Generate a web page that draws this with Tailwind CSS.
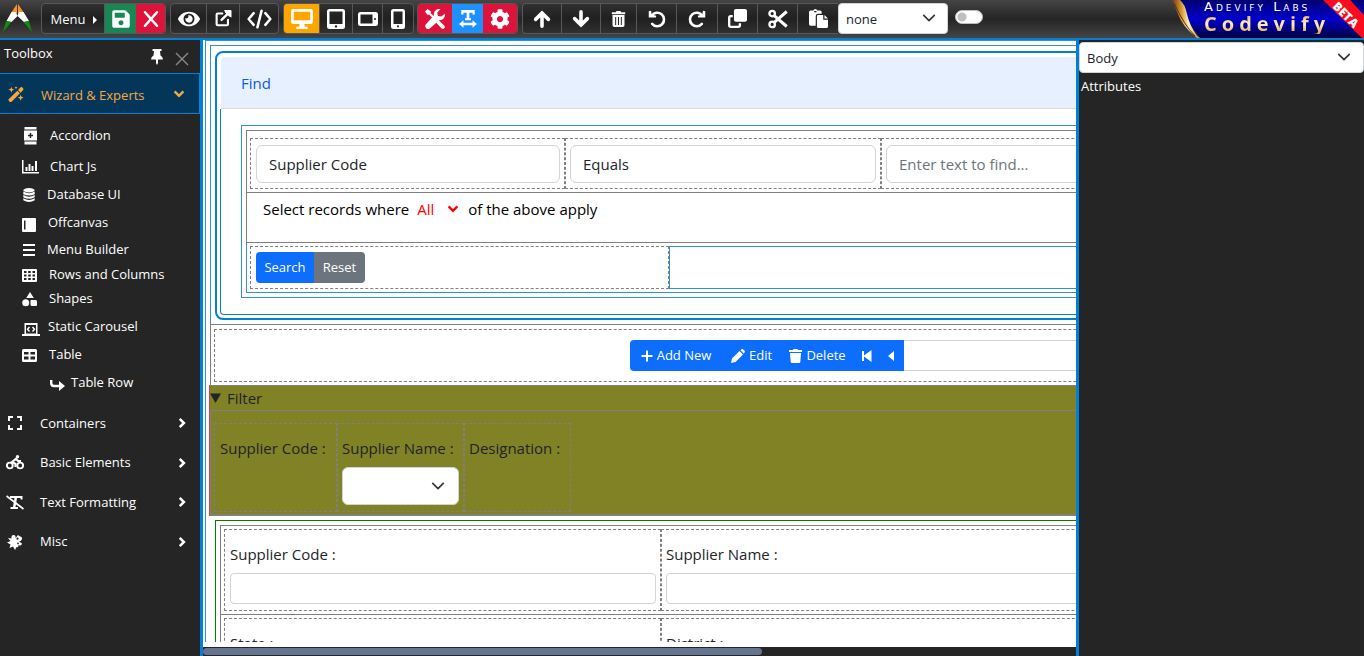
<!DOCTYPE html>
<html lang="en">
<head>
<meta charset="utf-8">
<title>Codevify</title>
<script src="https://cdn.jsdelivr.net/npm/@tailwindcss/browser@4"></script>
</head>
<body class="flex h-screen flex-col overflow-hidden bg-[#252525] font-['Open_Sans',sans-serif] text-[13px] text-white">

<svg class="hidden" aria-hidden="true">
  <symbol id="save" viewBox="0 0 448 512"><path d="M433.941 129.941l-83.882-83.882A48 48 0 0 0 316.118 32H48C21.49 32 0 53.49 0 80v352c0 26.51 21.49 48 48 48h352c26.51 0 48-21.49 48-48V163.882a48 48 0 0 0-14.059-33.941zM224 416c-35.346 0-64-28.654-64-64 0-35.346 28.654-64 64-64s64 28.654 64 64c0 35.346-28.654 64-64 64zm96-304.52V212c0 6.627-5.373 12-12 12H76c-6.627 0-12-5.373-12-12V108c0-6.627 5.373-12 12-12h228.52c3.183 0 6.235 1.264 8.485 3.515l3.48 3.48A11.996 11.996 0 0 1 320 111.48z"/></symbol>
  <symbol id="close" viewBox="0 0 24 24"><path d="M4 3L20 21M20 3L4 21" fill="none" stroke="currentColor" stroke-width="3.4" stroke-linecap="round"/></symbol>
  <symbol id="thin-close" viewBox="0 0 24 24"><path d="M3 3L21 21M21 3L3 21" fill="none" stroke="currentColor" stroke-width="2"/></symbol>
  <symbol id="eye" viewBox="0 0 576 512"><path d="M572.52 241.4C518.29 135.59 410.93 64 288 64S57.68 135.64 3.48 241.41a32.35 32.35 0 0 0 0 29.19C57.71 376.41 165.07 448 288 448s230.32-71.64 284.52-177.41a32.35 32.35 0 0 0 0-29.19zM288 400a144 144 0 1 1 144-144 143.93 143.93 0 0 1-144 144zm0-240a95.31 95.31 0 0 0-25.31 3.79 47.85 47.85 0 0 1-66.9 66.9A95.78 95.78 0 1 0 288 160z"/></symbol>
  <symbol id="external" viewBox="0 0 24 24"><path d="M11 5H4.500Q3 5 3 6.500V20Q3 21.500 4.500 21.500H17.500Q19 21.500 19 20V14" fill="none" stroke="currentColor" stroke-width="3" stroke-linecap="round"/><path d="M10 14L20 4" stroke="currentColor" stroke-width="3.400" stroke-linecap="round"/><path d="M13.500 0H22.500Q24 0 24 1.500V10.500L20.500 9L15 3.500Z"/></symbol>
  <symbol id="code" viewBox="0 0 30 24"><path d="M8 5L2 12L8 19M22 5L28 12L22 19M17.500 2L12.500 22" fill="none" stroke="currentColor" stroke-width="3" stroke-linecap="round" stroke-linejoin="round"/></symbol>
  <symbol id="desktop" viewBox="0 0 24 22"><path fill-rule="evenodd" d="M2.500 0H21.500Q24 0 24 2.500V14Q24 16.500 21.500 16.500H14.500L15.200 19.500H17.500Q18.500 19.500 18.500 20.700T17.500 22H6.500Q5.500 22 5.500 20.700T6.500 19.500H8.800L9.500 16.500H2.500Q0 16.500 0 14V2.500Q0 0 2.500 0ZM3 3V12.500H21V3Z"/></symbol>
  <symbol id="tablet" viewBox="0 0 18 20"><path fill-rule="evenodd" d="M2.500 0H15.500Q18 0 18 2.500V17.500Q18 20 15.500 20H2.500Q0 20 0 17.500V2.500Q0 0 2.500 0ZM2.500 2.500V15H15.500V2.500ZM9 16.200A1.200 1.200 0 1 0 9 18.600A1.200 1.200 0 1 0 9 16.200Z"/></symbol>
  <symbol id="tablet-wide" viewBox="0 0 20 14"><path fill-rule="evenodd" d="M2.500 0H17.500Q20 0 20 2.500V11.500Q20 14 17.500 14H2.500Q0 14 0 11.500V2.500Q0 0 2.500 0ZM2.500 2.500V11.500H14.500V2.500ZM17 6A1 1 0 1 0 17 8A1 1 0 1 0 17 6Z"/></symbol>
  <symbol id="phone" viewBox="0 0 14 20"><path fill-rule="evenodd" d="M2.500 0H11.500Q14 0 14 2.500V17.500Q14 20 11.500 20H2.500Q0 20 0 17.500V2.500Q0 0 2.500 0ZM2.500 2.500V15H11.500V2.500ZM7 16.200A1.100 1.100 0 1 0 7 18.400A1.100 1.100 0 1 0 7 16.200Z"/></symbol>
  <symbol id="tools" viewBox="0 0 512 512"><path d="M0 65L65 0L150 62V112L235 197L198 235L112 150H62ZM285 290C325 265 350 285 365 300L490 420C520 450 515 480 490 495C470 515 440 515 420 490L305 370C280 345 280 315 285 290Z"/><path d="M505 120C525 190 475 290 365 285L130 490C100 520 60 520 30 490C-5 460 0 415 25 390L225 165C220 60 300-20 395 7L315 90L330 180L420 195Z"/></symbol>
  <symbol id="textwidth" viewBox="0 0 24 24"><path d="M3 0H21V6H18V3.500H13.800V11H16V13.500H8V11H10.200V3.500H6V6H3ZM0 18.500L6 13.800V17H18V13.800L24 18.500L18 23.500V20.200H6V23.500Z"/></symbol>
  <symbol id="cog" viewBox="0 0 512 512"><path d="M487.4 315.7l-42.6-24.6c4.3-23.2 4.3-47 0-70.2l42.6-24.6c4.9-2.8 7.1-8.6 5.5-14-11.1-35.6-30-67.8-54.7-94.6-3.8-4.1-10-5.1-14.8-2.3L380.800 110c-17.9-15.4-38.5-27.3-60.8-35.1V25.800c0-5.6-3.9-10.5-9.4-11.7-36.7-8.2-74.3-7.8-109.2 0-5.5 1.2-9.4 6.1-9.4 11.7V75c-22.2 7.9-42.8 19.8-60.8 35.1L88.700 85.500c-4.9-2.8-11-1.9-14.8 2.3-24.7 26.7-43.6 58.9-54.7 94.6-1.7 5.400.6 11.2 5.5 14L67.300 221c-4.3 23.2-4.3 47 0 70.2l-42.6 24.6c-4.9 2.8-7.1 8.6-5.5 14 11.1 35.6 30 67.8 54.7 94.6 3.8 4.1 10 5.1 14.8 2.3l42.6-24.6c17.9 15.4 38.5 27.3 60.8 35.1v49.2c0 5.600 3.9 10.5 9.4 11.7 36.7 8.2 74.3 7.800 109.2 0 5.5-1.2 9.4-6.1 9.4-11.7v-49.2c22.2-7.9 42.800-19.8 60.800-35.100l42.6 24.6c4.9 2.8 11 1.9 14.8-2.3 24.7-26.7 43.6-58.9 54.7-94.6 1.5-5.5-.7-11.3-5.6-14.1zM256 336c-44.1 0-80-35.9-80-80s35.9-80 80-80 80 35.9 80 80-35.9 80-80 80z"/></symbol>
  <symbol id="arrow-up" viewBox="0 0 24 24"><path d="M12 21.500V5M3.500 12.500L12 4L20.500 12.500" fill="none" stroke="currentColor" stroke-width="4.800" stroke-linecap="round" stroke-linejoin="miter"/></symbol>
  <symbol id="trash-lines" viewBox="0 0 22 24"><path fill-rule="evenodd" d="M1 2H7L8 0H14L15 2H21V5H1ZM2 6H20V21.500Q20 24 17.500 24H4.500Q2 24 2 21.500ZM6 9V21H7.500V9ZM10.200 9V21H11.800V9ZM14.500 9V21H16V9Z"/></symbol>
  <symbol id="undo" viewBox="0 0 24 24"><path d="M5 7.500A9 9 0 1 1 5.500 18.500" fill="none" stroke="currentColor" stroke-width="3.400" stroke-linecap="round"/><path d="M1 1.500L4 1L5 6L11 7.500L10.500 10H1Z"/></symbol>
  <symbol id="copy" viewBox="0 0 24 24"><path d="M10 0H21.500Q24 0 24 2.500V13.500Q24 16 21.500 16H10Q7.500 16 7.500 13.500V2.500Q7.500 0 10 0Z"/><path d="M6 9H3.500Q1.500 9 1.500 11V20.500Q1.500 22.500 3.500 22.500H13Q15 22.500 15 20.500V18" fill="none" stroke="currentColor" stroke-width="3"/></symbol>
  <symbol id="scissors" viewBox="0 0 24 24"><g fill="none" stroke="currentColor"><circle cx="5" cy="5.500" r="3.300" stroke-width="2.800"/><circle cx="5" cy="18.500" r="3.300" stroke-width="2.800"/><path d="M7.500 8L22.500 21M7.500 16L22.500 3" stroke-width="3.600"/></g></symbol>
  <symbol id="paste" viewBox="0 0 24 24"><path fill-rule="evenodd" d="M2 2H5.500Q6 0 8 0T10.500 2H14Q16 2 16 4V6H11.500Q8.500 6 8.500 9V21H2Q0 21 0 19V4Q0 2 2 2ZM6.500 2.500V4H9.500V2.500Z"/><path d="M11.500 7.500H18V13.500H24V22Q24 24 22 24H12Q10 24 10 22V9Q10 7.500 11.500 7.500ZM19.500 7.500L24 12H19.500Z"/></symbol>
  <symbol id="chevron" viewBox="0 0 16 16"><path d="M2 5L8 11L14 5" fill="none" stroke="currentColor" stroke-width="2" stroke-linecap="round" stroke-linejoin="round"/></symbol>
  <symbol id="chevron-bold" viewBox="0 0 16 16"><path d="M3 5L8 10L13 5" fill="none" stroke="currentColor" stroke-width="2.800"/></symbol>
  <symbol id="chevron-next" viewBox="0 0 16 16"><path d="M5 2.500L10.500 8L5 13.500" fill="none" stroke="currentColor" stroke-width="3.400"/></symbol>
  <symbol id="pin" viewBox="0 0 12 16"><path d="M1.500 0H10.500V2H9L9.500 6.500Q12 8 12 10.500H7V14L6 16L5 14V10.500H0Q0 8 2.500 6.500L3 2H1.500Z"/></symbol>
  <symbol id="wand" viewBox="0 0 24 24"><path d="M1 20L14 7L18 11L5 24Q3 24.500 1.500 22.500T1 20ZM15 6L19 2Q20.500 1 22 2.500T23 5.500L19 10ZM5 1L6.200 4.300L9.500 5.500L6.200 6.700L5 10L3.800 6.700L.5 5.500L3.800 4.300ZM12 0L12.700 1.800L14.500 2.500L12.700 3.200L12 5L11.300 3.200L9.500 2.500L11.300 1.800ZM19 13L20.200 16.300L23.500 17.500L20.200 18.700L19 22L17.800 18.700L14.500 17.500L17.800 16.300Z"/></symbol>
  <symbol id="accordion" viewBox="0 0 14 18"><path fill-rule="evenodd" d="M1 0H13V2.500H1ZM.5 3.500H13.500V13.500H.5ZM6.300 6V7.800H4.500V9.200H6.300V11H7.700V9.200H9.500V7.800H7.700V6ZM1 14.500H13V17.500H1Z"/></symbol>
  <symbol id="chart" viewBox="0 0 17 14"><path d="M0 0H1.500V12H17V13.500H0ZM3.500 7H5.500V11H3.500ZM6.500 4H8.500V11H6.500ZM9.500 6H11.500V11H9.500ZM13 1H15V11H13Z"/></symbol>
  <symbol id="database" viewBox="0 0 14 16"><ellipse cx="7" cy="2.500" rx="6.500" ry="2.500"/><path d="M.5 4Q7 8 13.500 4V7Q7 10 .5 7ZM.5 8Q7 12 13.500 8V10.500Q7 14 .5 10.500ZM.5 11.800Q7 15.500 13.500 11.800V14Q7 18 .5 14Z"/></symbol>
  <symbol id="offcanvas" viewBox="0 0 14 14"><path fill-rule="evenodd" d="M1 0H13Q14 0 14 1V13Q14 14 13 14H1Q0 14 0 13V1Q0 0 1 0ZM2 2.500V11.500H3.500V2.500Z"/></symbol>
  <symbol id="menu" viewBox="0 0 14 12"><path d="M1 0H13V2H1ZM1 5H13V7H1ZM1 10H13V12H1Z"/></symbol>
  <symbol id="grid3" viewBox="0 0 15 13"><path fill-rule="evenodd" d="M1 0H14Q15 0 15 1V12Q15 13 14 13H1Q0 13 0 12V1Q0 0 1 0ZM2 2V4H4.500V2ZM6.200 2V4H8.800V2ZM10.500 2V4H13V2ZM2 5.500V7.500H4.500V5.500ZM6.200 5.500V7.500H8.800V5.500ZM10.500 5.500V7.500H13V5.500ZM2 9V11H4.500V9ZM6.200 9V11H8.800V9ZM10.500 9V11H13V9Z"/></symbol>
  <symbol id="shapes" viewBox="0 0 15 15"><path d="M8 0L11.800 6H4.200ZM9 8H13.500Q15 8 15 9.500V13Q15 14 14 14H10Q8.500 14 8.500 12.500V8.500Z"/><circle cx="3.700" cy="10.800" r="3.500"/></symbol>
  <symbol id="carousel" viewBox="0 0 18 15"><path fill-rule="evenodd" d="M2.500 1H15.500V12H18V14H0V12H2.500ZM4 3V11.500H14V3Z"/><path d="M7.500 5L5.500 7.300L7.500 9.500M10.500 5L12.500 7.300L10.500 9.500" fill="none" stroke="currentColor" stroke-width="1.500"/></symbol>
  <symbol id="table" viewBox="0 0 15 13"><path fill-rule="evenodd" d="M1.500 0H13.500Q15 0 15 1.500V11.500Q15 13 13.500 13H1.500Q0 13 0 11.500V1.500Q0 0 1.500 0ZM2 3V5.500H6.500V3ZM8.500 3V5.500H13V3ZM2 7.500V10.500H6.500V7.500ZM8.500 7.500V10.500H13V7.500Z"/></symbol>
  <symbol id="branch" viewBox="0 0 15 12"><path d="M1.200 1V4Q1.200 7 4 7H11" fill="none" stroke="currentColor" stroke-width="2.400"/><path d="M9 2L15 7L9 12Z"/></symbol>
  <symbol id="expand" viewBox="0 0 14 14"><path d="M1 5V1H5M9 1H13V5M13 9V13H9M5 13H1V9" fill="none" stroke="currentColor" stroke-width="2"/></symbol>
  <symbol id="bike" viewBox="0 0 18 15"><g fill="none" stroke="currentColor" stroke-width="1.900"><circle cx="3.800" cy="10.500" r="2.900"/><circle cx="14.200" cy="10.500" r="2.900"/><path d="M9.500 12V9L6 7L10 3.800L12 6H15" stroke-width="2.200"/></g><circle cx="11.500" cy="1.700" r="1.700"/></symbol>
  <symbol id="textslash" viewBox="0 0 18 15"><path d="M4 1H16.500V4.500H14.500V3H11L9.500 12H12V14H4.500V12H7L8.500 3H4Z"/><path d="M.5 1L17.500 14" stroke="currentColor" stroke-width="1.800"/></symbol>
  <symbol id="puzzle" viewBox="0 0 16 16"><path fill-rule="evenodd" d="M1 4L4.500 4.500Q4 1 6.500 1T8.500 4L11 1L13 2.500Q15.500 3 15 5T12 7.500L15 9.500Q14.500 12.500 11.500 11Q11.500 14 9.500 13L8 16L6 12.500L2.500 14L3.500 10.500L0 8.500L3.500 7ZM10.500 3.600A1.100 1.100 0 1 0 10.500 5.800A1.100 1.100 0 1 0 10.500 3.600ZM11 8.500A.9 .9 0 1 0 11 10.300A.9 .9 0 1 0 11 8.500Z"/></symbol>
  <symbol id="plus" viewBox="0 0 12 12"><path d="M6 .5V11.500M.5 6H11.500" stroke="currentColor" stroke-width="2"/></symbol>
  <symbol id="pencil" viewBox="0 0 14 14"><path d="M0 14L1 9.500L8.500 2L12 5.500L4.500 13ZM9.500 1.200L10.500 .3Q11.500-.3 12.500 .7L13.400 1.600Q14.300 2.600 13.500 3.600L12.700 4.500Z"/></symbol>
  <symbol id="bin" viewBox="0 0 13 14"><path d="M0 1H4L4.500 0H8.500L9 1H13V3H0ZM1 4H12L11.300 13Q11.200 14 10.200 14H2.800Q1.800 14 1.700 13Z"/></symbol>
</svg>

<header class="flex h-10 shrink-0 items-start overflow-hidden border-b-2 border-[#0080d8] bg-linear-to-b from-[#454545] via-[#252525] to-[#454545] pt-[3px]">
  <svg class="mt-px ml-[3px] h-7 w-[30px]" viewBox="0 0 30 28" role="img" aria-label="Adevify"><path d="M14 0L8 9L14 9ZM15 0L21 9L15 10Z" fill="#f79433"/><path d="M8.500 8L13 8L14.500 12L8.500 18L3.500 17ZM20.500 8L16 8L14.500 12L21 18L26 17Z" fill="#fff"/><path d="M3 17L8.500 18L0 28ZM26 17L20.500 18L29 28Z" fill="#128a12"/></svg>
  <div class="ml-2 flex h-[31px] overflow-hidden rounded border border-[#55585c] bg-linear-to-b from-[#303030] via-[#202020] to-[#303030]">
    <button class="flex w-[63px] items-center justify-center gap-2 border-r border-[#55585c] pt-0.5 pl-0.5">Menu <span class="h-0 w-0 border-y-4 border-l-4 border-y-transparent border-l-white"></span></button>
    <button aria-label="Save" class="flex w-[31px] items-center justify-center bg-[#198754]"><svg class="h-5 w-[18px] fill-current"><use href="#save"/></svg></button>
    <button aria-label="Cancel" class="flex w-[29px] items-center justify-center bg-[#dc143c]"><svg class="h-[18px] w-[18px]"><use href="#close"/></svg></button>
  </div>
  <div class="ml-1 flex h-[31px] divide-x divide-[#55585c] overflow-hidden rounded border border-[#55585c] bg-linear-to-b from-[#303030] via-[#202020] to-[#303030]">
    <button aria-label="Preview" class="flex w-9 items-center justify-center"><svg class="h-5 w-[22px] fill-current"><use href="#eye"/></svg></button>
    <button aria-label="Open" class="flex w-[33px] items-center justify-center"><svg class="h-[17px] w-[18px] fill-current"><use href="#external"/></svg></button>
    <button aria-label="Code" class="flex w-[38px] items-center justify-center"><svg class="h-5 w-[25px]"><use href="#code"/></svg></button>
  </div>
  <div class="ml-1 flex h-[31px] divide-x divide-[#55585c] overflow-hidden rounded border border-[#55585c] bg-linear-to-b from-[#303030] via-[#202020] to-[#303030]">
    <button aria-label="Desktop" class="flex w-9 items-center justify-center bg-[#ffa500]"><svg class="h-5 w-[22px] fill-current"><use href="#desktop"/></svg></button>
    <button aria-label="Tablet" class="flex w-[33px] items-center justify-center"><svg class="h-5 w-[18px] fill-current"><use href="#tablet"/></svg></button>
    <button aria-label="Tablet landscape" class="flex w-[30px] items-center justify-center"><svg class="h-[14px] w-5 fill-current"><use href="#tablet-wide"/></svg></button>
    <button aria-label="Phone" class="flex w-[30px] items-center justify-center"><svg class="h-5 w-[14px] fill-current"><use href="#phone"/></svg></button>
  </div>
  <div class="ml-[3px] flex h-[31px] overflow-hidden rounded border border-[#55585c]">
    <button aria-label="Tools" class="flex w-[34px] items-center justify-center bg-[#dc143c]"><svg class="h-5 w-5 fill-current"><use href="#tools"/></svg></button>
    <button aria-label="Text width" class="flex w-[31px] items-center justify-center bg-[#1e90ff]"><svg class="h-[18px] w-[18px] fill-current"><use href="#textwidth"/></svg></button>
    <button aria-label="Settings" class="flex w-[34px] items-center justify-center bg-[#dc143c]"><svg class="h-5 w-5 fill-current"><use href="#cog"/></svg></button>
  </div>
  <div class="ml-1 flex h-[31px] divide-x divide-[#55585c] rounded-l border border-r-0 border-[#55585c] bg-linear-to-b from-[#303030] via-[#202020] to-[#303030]">
    <button aria-label="Move up" class="flex w-[39px] items-center justify-center"><svg class="h-[18px] w-[18px]"><use href="#arrow-up"/></svg></button>
    <button aria-label="Move down" class="flex w-[39px] items-center justify-center"><svg class="h-[18px] w-[18px] rotate-180"><use href="#arrow-up"/></svg></button>
    <button aria-label="Remove" class="flex w-9 items-center justify-center"><svg class="h-4 w-[15px] fill-current"><use href="#trash-lines"/></svg></button>
    <button aria-label="Undo" class="flex w-10 items-center justify-center"><svg class="h-[18px] w-[18px] fill-current"><use href="#undo"/></svg></button>
    <button aria-label="Redo" class="flex w-[41px] items-center justify-center"><svg class="h-[18px] w-[18px] -scale-x-100 fill-current"><use href="#undo"/></svg></button>
    <button aria-label="Copy" class="flex w-10 items-center justify-center"><svg class="h-[19px] w-[19px] fill-current"><use href="#copy"/></svg></button>
    <button aria-label="Cut" class="flex w-10 items-center justify-center"><svg class="h-5 w-5"><use href="#scissors"/></svg></button>
    <button aria-label="Paste" class="flex w-10 items-center justify-center"><svg class="h-[19px] w-[19px] fill-current"><use href="#paste"/></svg></button>
  </div>
  <div class="relative">
    <select aria-label="Action" class="h-[31px] w-[110px] appearance-none rounded border border-[#ced4da] bg-white px-[7px] pt-0.5 text-[#212529]"><option>none</option></select>
    <svg class="pointer-events-none absolute top-2 right-3 h-3.5 w-3.5 text-[#343a40]"><use href="#chevron"/></svg>
  </div>
  <input type="checkbox" role="switch" aria-label="Toggle" class="mt-[7px] ml-[7px] h-[14px] w-7 appearance-none rounded-full border border-[#bfbfbf] bg-white bg-[radial-gradient(circle_at_6px_6px,#bfbfbf_4px,transparent_5px)]">
  <div class="-mt-[3px] ml-auto flex h-[38px] w-[192px] shrink-0">
    <svg class="absolute h-[38px] w-[192px]" viewBox="0 0 192 38" aria-hidden="true">
      <defs><linearGradient id="navy" x2="0" y2="1"><stop stop-color="#000070"/><stop offset=".5" stop-color="#0000cc"/><stop offset="1" stop-color="#000040"/></linearGradient>
      <linearGradient id="gold"><stop stop-color="#6b3b10"/><stop offset=".35" stop-color="#d99a35"/><stop offset=".6" stop-color="#fff3c0"/><stop offset="1" stop-color="#c98a2c"/></linearGradient></defs>
      <path d="M6 0H192V38H28Q16 24 6 0Z" fill="url(#navy)"/>
      <path d="M0 0H8Q13 4 15 14T25 36L28 38H25Q10 26 6 14Z" fill="url(#gold)"/>
      <path d="M2 3Q12 25 23 36" stroke="#5a2d0c" fill="none"/>
      <path d="M151 0H178L192 15V38H190Z" fill="#fa0c1e"/>
      <text x="0" y="0" transform="translate(160 7) rotate(45)" fill="#fff" font-family="Open Sans" font-weight="800" font-size="12">BETA</text>
    </svg>
    <div class="relative ml-8">
      <p class="font-['DejaVu_Sans',sans-serif] text-[13px] leading-[14px] tracking-[3px] whitespace-nowrap [font-variant:small-caps]">Adevify Labs</p>
      <p class="bg-linear-to-b from-[#e8b040] via-[#fff0c0] to-[#e0a030] bg-clip-text text-[20px] leading-[20px] font-bold tracking-[5px] text-transparent">Codevify</p>
    </div>
  </div>
</header>

<div class="flex min-h-0 flex-1">
  <aside class="w-[203px] shrink-0 border-r-[3px] border-[#0080d8]">
    <div class="flex h-[33px] items-start pt-1 pr-2.5 pl-1">
      <h1 class="flex-1">Toolbox</h1>
      <button aria-label="Pin" class="mt-[5px] mr-[11px]"><svg class="h-4 w-3 fill-current"><use href="#pin"/></svg></button>
      <button aria-label="Close" class="mt-[7px] text-[#8c8c8c]"><svg class="h-4 w-4"><use href="#thin-close"/></svg></button>
    </div>
    <button class="flex h-[41px] w-full items-center border border-l-0 border-[#0080d8] bg-[#04365a] pr-[13px] pl-2 text-[#f8a840]">
      <svg class="h-4 w-4 fill-current"><use href="#wand"/></svg><span class="ml-[17px] flex-1 pt-1 text-left">Wizard &amp; Experts</span><svg class="h-3.5 w-3.5"><use href="#chevron-bold"/></svg>
    </button>
    <nav class="pt-1.5 pl-[22px]">
      <button class="flex h-8 items-center gap-[11px]"><svg class="h-[18px] w-[17px] fill-current"><use href="#accordion"/></svg>Accordion</button>
      <button class="mt-px flex h-7 items-center gap-[11px]"><svg class="h-3.5 w-[17px] fill-current"><use href="#chart"/></svg>Chart Js</button>
      <button class="flex h-7 items-center gap-[11px]"><svg class="h-3.5 w-3.5 fill-current"><use href="#database"/></svg>Database UI</button>
      <button class="flex h-7 items-center gap-3"><svg class="mt-1 h-3.5 w-3.5 fill-current"><use href="#offcanvas"/></svg>Offcanvas</button>
      <button class="flex h-[26px] items-center gap-[11px]"><svg class="h-3 w-3.5 fill-current"><use href="#menu"/></svg>Menu Builder</button>
      <button class="flex h-6 items-center gap-3"><svg class="h-[13px] w-[15px] fill-current"><use href="#grid3"/></svg>Rows and Columns</button>
      <button class="flex h-6 items-center gap-3"><svg class="h-[15px] w-[15px] fill-current"><use href="#shapes"/></svg>Shapes</button>
      <button class="flex h-8 items-center gap-2"><svg class="mt-1 h-[15px] w-[18px] fill-current"><use href="#carousel"/></svg>Static Carousel</button>
      <button class="flex h-6 items-center gap-3"><svg class="h-[13px] w-[15px] fill-current"><use href="#table"/></svg>Table</button>
      <button class="ml-7 flex h-8 items-center gap-1.5"><svg class="mt-1 h-3 w-[15px] fill-current"><use href="#branch"/></svg>Table Row</button>
    </nav>
    <nav class="pt-1">
      <button class="flex h-10 w-full items-center pr-3 pl-1.5"><svg class="h-3.5 w-[18px]"><use href="#expand"/></svg><span class="ml-4 flex-1 pt-px text-left">Containers</span><svg class="h-3 w-3"><use href="#chevron-next"/></svg></button>
      <button class="flex h-[39px] w-full items-center pr-3 pl-1.5"><svg class="h-[15px] w-[18px] fill-current"><use href="#bike"/></svg><span class="ml-4 flex-1 pt-px text-left">Basic Elements</span><svg class="h-3 w-3"><use href="#chevron-next"/></svg></button>
      <button class="flex h-10 w-full items-center pr-3 pl-1.5"><svg class="h-[15px] w-[18px] fill-current"><use href="#textslash"/></svg><span class="ml-4 flex-1 pt-px text-left">Text Formatting</span><svg class="h-3 w-3"><use href="#chevron-next"/></svg></button>
      <button class="flex h-[39px] w-full items-center pr-3 pl-1.5"><svg class="h-4 w-[18px] fill-current"><use href="#puzzle"/></svg><span class="ml-4 flex-1 pt-px text-left">Misc</span><svg class="h-3 w-3"><use href="#chevron-next"/></svg></button>
    </nav>
  </aside>

  <main class="flex min-w-0 flex-1 flex-col bg-white text-[15px] text-[#212529]">
    <div class="min-h-0 flex-1 overflow-hidden pl-0.5">
      <div class="h-full w-[1366px] border-t border-l border-[#3090d8]">
        <section class="mt-1 ml-1 border-t border-l border-[#3090d8] pt-[5px] pb-1 pl-1">
          <div class="rounded-lg border-2 border-[#0080d8] pt-1 pr-[3px] pb-[3px] pl-[3px]">
            <button class="ml-px flex h-[52px] w-full items-center rounded-t border-b border-[#d5dbe3] bg-[#e7f0ff] px-5 pt-0.5 text-[#0d5bdc]">Find</button>
            <div class="rounded-bl border-b border-l border-[#0080d8] py-4 pl-5">
              <div class="border border-[#3090d8] p-1">
                <div class="border border-[#808080] pt-[7px] pb-[3px] pl-[3px]">
                  <div class="flex">
                    <div class="w-[315px] border border-dashed border-[#808080] pt-1.5 pr-1 pb-[5px] pl-[5px]"><select aria-label="Field" class="block h-[38px] w-full appearance-none rounded-md border border-[#ced4da] bg-white px-3"><option>Supplier Code</option></select></div>
                    <div class="w-[316px] border border-dashed border-[#808080] px-1 pt-1.5 pb-[5px]"><select aria-label="Condition" class="block h-[38px] w-full appearance-none rounded-md border border-[#ced4da] bg-white px-3"><option>Equals</option></select></div>
                    <div class="flex-1 border border-dashed border-[#808080] px-1 pt-1.5 pb-[5px]"><input aria-label="Text to find" placeholder="Enter text to find..." class="block h-[38px] w-full rounded-md border border-[#ced4da] px-3 placeholder:text-[#6c757d]"></div>
                  </div>
                </div>
                <div class="flex h-[50px] items-start border-b border-l border-[#808080] pt-[5px] pl-4 text-black">
                  <span>Select records where</span>
                  <span class="relative mx-2"><select aria-label="Match" class="w-[43px] appearance-none text-[red]"><option>All</option></select><svg class="pointer-events-none absolute top-1 right-0 h-3.5 w-3.5 text-[red]"><use href="#chevron-bold"/></svg></span>
                  <span>of the above apply</span>
                </div>
                <div class="flex border-b border-l border-[#3090d8] py-[3px] pl-[3px]">
                  <div class="h-[43px] w-[419px] border border-dashed border-[#808080] px-[5px] py-[5px] text-[13px]">
                    <div class="flex h-[31px] w-[109px] overflow-hidden rounded text-white"><button class="w-[58px] bg-[#0d6efd]">Search</button><button class="flex-1 bg-[#6c757d]">Reset</button></div>
                  </div>
                  <div class="flex-1 border border-[#3090d8]"></div>
                </div>
              </div>
            </div>
          </div>
        </section>
        <section class="ml-1 border-t border-l border-[#808080] pt-1 pb-[3px] pl-[3px]">
          <div class="flex h-[53px] justify-center border border-dashed border-[#808080] pt-2.5 text-[13px]">
            <div class="flex h-[31px] w-[525px] text-white">
              <div class="flex items-center rounded-l bg-[#0d6efd]">
                <button class="flex w-[92px] items-center justify-center gap-1 whitespace-nowrap"><svg class="h-3 w-3"><use href="#plus"/></svg>Add New</button>
                <button class="flex w-[59px] items-center justify-center gap-1"><svg class="h-3.5 w-3.5 fill-current"><use href="#pencil"/></svg>Edit</button>
                <button class="flex w-[73px] items-center justify-center gap-1"><svg class="h-3.5 w-[13px] fill-current"><use href="#bin"/></svg>Delete</button>
              </div>
              <div class="flex w-[50px] bg-[#0d6efd]">
                <button aria-label="First" class="flex w-[26px] items-center justify-center"><svg class="h-3 w-3 fill-current" viewBox="0 0 12 12"><path d="M1 1H3V5.500L10.500 0V12L3 6.500V11H1Z"/></svg></button>
                <button aria-label="Previous" class="flex w-6 items-center justify-center"><svg class="h-3 w-3 fill-current" viewBox="0 0 12 12"><path d="M8 1V11L2 6Z"/></svg></button>
              </div>
              <input aria-label="Record" class="min-w-0 flex-1 border-y border-[#ced4da] text-[#212529]">
            </div>
          </div>
        </section>
        <details open class="ml-[3px] border-l border-[#d04058] bg-[#818125]">
          <summary class="flex h-[26px] items-center gap-[5px] border-y border-[#808080]"><svg class="h-3 w-3 fill-current" viewBox="0 0 12 12"><path d="M0 1.500H11L5.500 11Z"/></svg>Filter</summary>
          <div class="flex h-[105px] border-b-2 border-l border-[#808080] pt-3 pb-0.5 pl-[3px]">
            <div class="w-[123px] border border-dashed border-[#808080] pt-[13px] pl-[5px] whitespace-nowrap">Supplier Code :</div>
            <div class="w-[127px] border border-dashed border-[#808080] px-1 pt-[13px] whitespace-nowrap">
              <label for="supplier-filter">Supplier Name :</label>
              <div class="relative mt-[7px]"><select id="supplier-filter" class="block h-[38px] w-full appearance-none rounded-md border border-[#ced4da] bg-white"><option></option></select><svg class="pointer-events-none absolute top-3 right-3.5 h-3.5 w-3.5 text-[#343a40]"><use href="#chevron"/></svg></div>
            </div>
            <div class="w-[107px] border border-dashed border-[#808080] pt-[13px] pl-1 whitespace-nowrap">Designation :</div>
          </div>
        </details>
        <form class="mt-1 ml-[9px] border-t border-l border-[green] pt-1 pl-1">
          <div class="border border-[#808080] py-[3px] pl-[3px]">
            <div class="flex h-[82px]">
              <div class="w-[437px] border border-dashed border-[#808080] pt-[13px] pr-1 pl-[5px]"><label for="code" class="block">Supplier Code :</label><input id="code" class="mt-[7px] block h-[31px] w-full rounded border border-[#ced4da]"></div>
              <div class="flex-1 border border-dashed border-[#808080] px-1 pt-[13px]"><label for="name" class="block">Supplier Name :</label><input id="name" class="mt-[7px] block h-[31px] w-full rounded border border-[#ced4da]"></div>
            </div>
          </div>
          <div class="border-l border-[#808080] py-[3px] pl-[3px]">
            <div class="flex h-[82px]">
              <div class="w-[437px] border border-dashed border-[#808080] pt-[13px] pr-1 pl-[5px]"><label for="state" class="block">State :</label><input id="state" class="mt-[7px] block h-[31px] w-full rounded border border-[#ced4da]"></div>
              <div class="flex-1 border border-dashed border-[#808080] px-1 pt-[13px]"><label for="district" class="block">District :</label><input id="district" class="mt-[7px] block h-[31px] w-full rounded border border-[#ced4da]"></div>
            </div>
          </div>
        </form>
      </div>
    </div>
    <div class="mt-[5px] h-[9px] bg-[#252525] py-px"><div class="h-full w-[64%] rounded-full bg-[#65748f]"></div></div>
  </main>

  <aside class="w-[288px] shrink-0 border-l-[3px] border-[#0080d8] pt-0.5">
    <div class="relative">
      <select aria-label="Element" class="block h-[31px] w-full appearance-none rounded border border-[#ced4da] bg-white px-[7px] pt-0.5 text-[#212529]"><option>Body</option></select>
      <svg class="pointer-events-none absolute top-2 right-[13px] h-3.5 w-3.5 text-[#343a40]"><use href="#chevron"/></svg>
    </div>
    <h2 class="mt-1 pl-0.5">Attributes</h2>
  </aside>
</div>
</body>
</html>
